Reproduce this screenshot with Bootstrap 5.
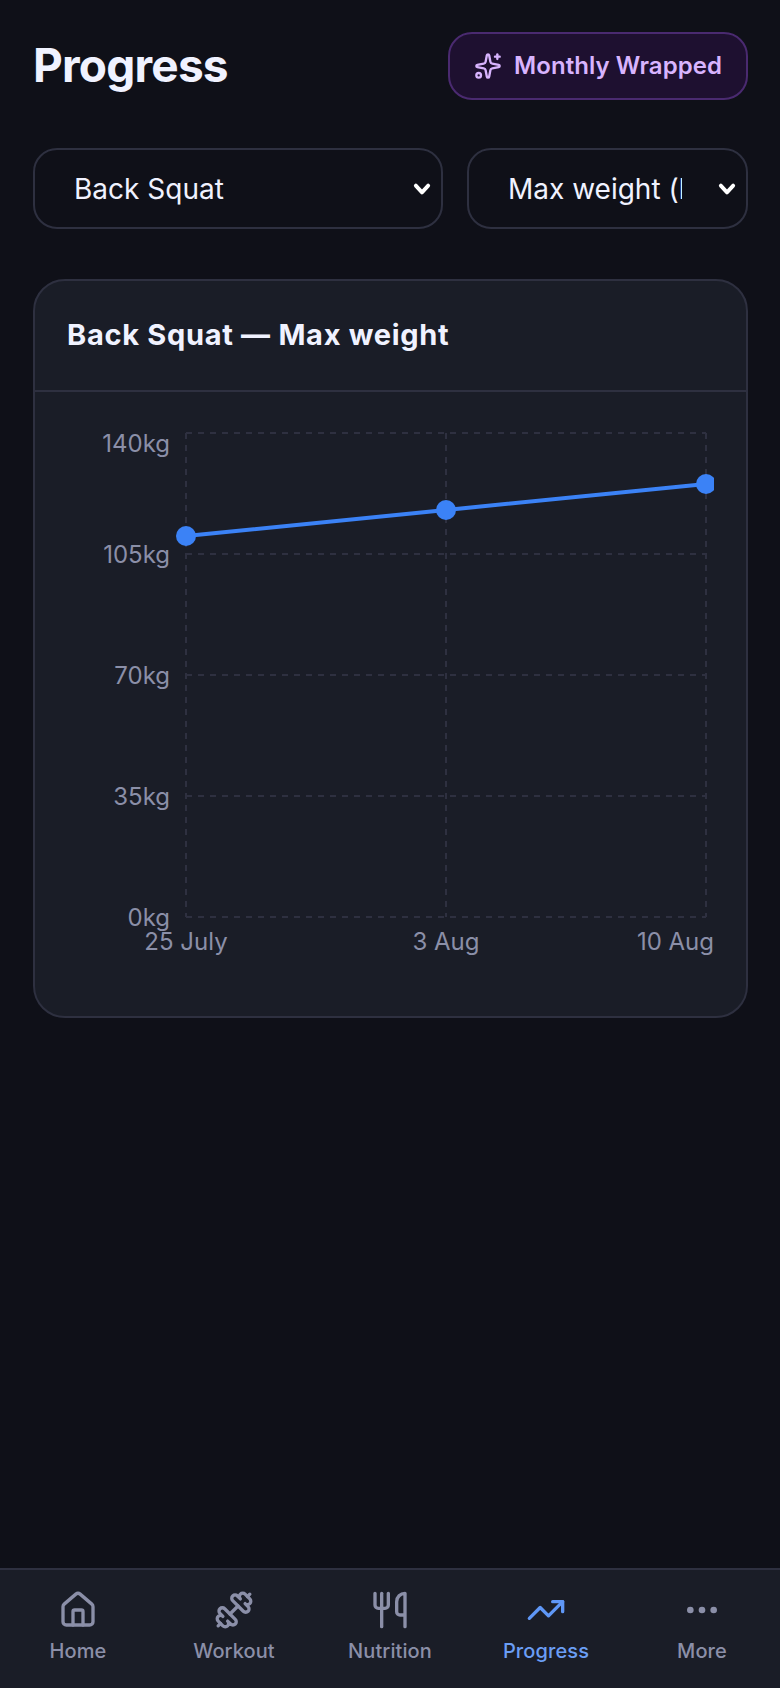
<!DOCTYPE html>
<html lang="en">
  <head>
    <meta charset="UTF-8" />
    <meta name="viewport" content="width=device-width, initial-scale=1.0" />
    <title>Progress</title>
    <link rel="stylesheet" href="https://cdn.jsdelivr.net/npm/bootstrap@5.3.5/dist/css/bootstrap.min.css" />
    <style>
      body {
        background: #0f1018;
        color: #f0f2ff;
        font-family: Inter, "Liberation Sans", sans-serif;
        height: 1688px;
      }
      .app-screen {
        height: 1688px;
      }
      .page-main {
        padding: 32px 32px 0 33px;
      }
      .page-title {
        font-size: 46px;
        font-weight: 700;
        letter-spacing: -0.8px;
        margin: 0;
        color: #f0f2ff;
      }
      .wrapped-btn {
        height: 68px;
        padding: 0 24px;
        gap: 12px;
        border: 2px solid #4a2a70;
        border-radius: 24px;
        background: #1e1030;
        color: #d8b4fe;
        font-size: 24px;
        font-weight: 600;
        letter-spacing: 0.05px;
        white-space: nowrap;
      }
      .wrapped-btn:hover {
        background: #1e1030;
        border-color: #4a2a70;
        color: #d8b4fe;
      }
      .filter-row {
        gap: 24px;
        margin-top: 48px;
      }
      .filter-select {
        height: 81px;
        padding: 0 64px 0 39px;
        border: 2px solid #2e3040;
        border-radius: 24px;
        background-color: #0f1018;
        background-image: url("data:image/svg+xml,%3csvg xmlns='http://www.w3.org/2000/svg' viewBox='0 0 16 12'%3e%3cpath fill='none' stroke='%23fff' stroke-width='3.4' stroke-linecap='round' stroke-linejoin='round' d='M2.5 3l5.5 6 5.5-6'/%3e%3c/svg%3e");
        background-position: right 10px center;
        background-size: 18px 14px;
        color: #f0f2ff;
        font-size: 28px;
      }
      .filter-main {
        flex: 1 1 0;
        min-width: 0;
      }
      .filter-metric {
        flex: 0 0 281px;
        width: 281px;
      }
      .chart-card {
        margin-top: 50px;
        background: #1a1d27;
        border: 2px solid #2e3040;
        border-radius: 32px;
        height: 739px;
        overflow: hidden;
      }
      .chart-head {
        background: transparent;
        border-bottom: 2px solid #2e3040;
        height: 112px;
        padding: 0 32px;
      }
      .chart-title {
        font-size: 29px;
        font-weight: 700;
        letter-spacing: 0.7px;
        color: #f0f2ff;
        margin: 0;
      }
      .chart-body {
        padding: 32px 0 32px 32px;
      }
      .chart-svg {
        display: block;
        width: 647px;
        height: 560px;
      }
      .chart-svg text {
        font-family: Inter, "Liberation Sans", sans-serif;
        font-size: 24px;
        fill: #8b8fa8;
      }
      .grid-line {
        stroke: #2e3040;
        stroke-width: 2;
        stroke-dasharray: 6 6;
      }
      .bottom-nav {
        height: 120px;
        background: #1a1d27;
        border-top: 2px solid #2e3040;
      }
      .nav-entry {
        flex: 1 1 0;
        padding-top: 20px;
        gap: 6px;
        color: #8b8fa8;
        font-size: 20px;
        font-weight: 500;
        letter-spacing: 0.1px;
        text-decoration: none;
      }
      .nav-entry.is-active {
        color: #6b9ef5;
      }
      .nav-entry svg {
        display: block;
      }
      .is-active svg {
        color: #5f97f6;
      }
    </style>
  </head>
  <body>
    <div class="app-screen d-flex flex-column">
      <main class="page-main flex-grow-1">
        <div class="d-flex justify-content-between align-items-center">
          <h1 class="page-title">Progress</h1>
          <button type="button" class="btn wrapped-btn d-flex align-items-center">
            <svg width="28" height="28" viewBox="0 0 24 24" fill="none" stroke="currentColor" stroke-width="2" stroke-linecap="round" stroke-linejoin="round">
              <path d="M11.017 2.814a1 1 0 0 1 1.966 0l1.051 5.558a2 2 0 0 0 1.594 1.594l5.558 1.051a1 1 0 0 1 0 1.966l-5.558 1.051a2 2 0 0 0-1.594 1.594l-1.051 5.558a1 1 0 0 1-1.966 0l-1.051-5.558a2 2 0 0 0-1.594-1.594l-5.558-1.051a1 1 0 0 1 0-1.966l5.558-1.051a2 2 0 0 0 1.594-1.594z" />
              <path d="M20 2v4" />
              <path d="M22 4h-4" />
              <circle cx="4" cy="20" r="2" />
            </svg>
            Monthly Wrapped
          </button>
        </div>

        <div class="d-flex filter-row">
          <select class="form-select filter-select filter-main">
            <option>Back Squat</option>
            <option>Bench Press</option>
            <option>Deadlift</option>
          </select>
          <select class="form-select filter-select filter-metric">
            <option>Max weight (kg)</option>
            <option>Total volume (kg)</option>
          </select>
        </div>

        <div class="card chart-card">
          <div class="card-header chart-head d-flex align-items-center">
            <h2 class="chart-title">Back Squat — Max weight</h2>
          </div>
          <div class="card-body chart-body">
            <svg class="chart-svg" viewBox="0 0 647 560">
              <line class="grid-line" x1="119" y1="9" x2="639" y2="9" />
              <line class="grid-line" x1="119" y1="130" x2="639" y2="130" />
              <line class="grid-line" x1="119" y1="251" x2="639" y2="251" />
              <line class="grid-line" x1="119" y1="372" x2="639" y2="372" />
              <line class="grid-line" x1="119" y1="493" x2="639" y2="493" />
              <line class="grid-line" x1="119" y1="9" x2="119" y2="493" />
              <line class="grid-line" x1="379" y1="9" x2="379" y2="493" />
              <line class="grid-line" x1="639" y1="9" x2="639" y2="493" />

              <text x="103" y="28" text-anchor="end">140kg</text>
              <text x="103" y="139" text-anchor="end">105kg</text>
              <text x="103" y="260" text-anchor="end">70kg</text>
              <text x="103" y="381" text-anchor="end">35kg</text>
              <text x="103" y="502" text-anchor="end">0kg</text>

              <text x="119" y="526" text-anchor="middle">25 July</text>
              <text x="379" y="526" text-anchor="middle">3 Aug</text>
              <text x="647" y="526" text-anchor="end">10 Aug</text>

              <polyline points="119,112 379,86 639,60" fill="none" stroke="#3b82f6" stroke-width="4" />
              <circle cx="119" cy="112" r="10" fill="#3b82f6" />
              <circle cx="379" cy="86" r="10" fill="#3b82f6" />
              <circle cx="639" cy="60" r="10" fill="#3b82f6" />
            </svg>
          </div>
        </div>
      </main>

      <nav class="bottom-nav d-flex">
        <a href="#" class="nav-entry d-flex flex-column align-items-center">
          <svg width="40" height="40" viewBox="0 0 24 24" fill="none" stroke="currentColor" stroke-width="2" stroke-linecap="round" stroke-linejoin="round">
            <path d="M15 21v-8a1 1 0 0 0-1-1h-4a1 1 0 0 0-1 1v8" />
            <path d="M3 10a2 2 0 0 1 .709-1.528l7-6a2 2 0 0 1 2.582 0l7 6A2 2 0 0 1 21 10v9a2 2 0 0 1-2 2H5a2 2 0 0 1-2-2z" />
          </svg>
          Home
        </a>
        <a href="#" class="nav-entry d-flex flex-column align-items-center">
          <svg width="40" height="40" viewBox="0 0 24 24" fill="none" stroke="currentColor" stroke-width="2" stroke-linecap="round" stroke-linejoin="round">
            <path d="M17.596 12.768a2 2 0 1 0 2.829-2.829l-1.768-1.767a2 2 0 0 0 2.828-2.829l-2.828-2.828a2 2 0 0 0-2.829 2.828l-1.767-1.768a2 2 0 1 0-2.829 2.829z" />
            <path d="m2.5 21.5 1.4-1.4" />
            <path d="m20.1 3.9 1.4-1.4" />
            <path d="M5.343 21.485a2 2 0 1 0 2.829-2.828l1.767 1.768a2 2 0 1 0 2.829-2.829l-6.364-6.364a2 2 0 1 0-2.829 2.829l1.768 1.767a2 2 0 0 0-2.828 2.829z" />
            <path d="m9.6 14.4 4.8-4.8" />
          </svg>
          Workout
        </a>
        <a href="#" class="nav-entry d-flex flex-column align-items-center">
          <svg width="40" height="40" viewBox="0 0 24 24" fill="none" stroke="currentColor" stroke-width="2" stroke-linecap="round" stroke-linejoin="round">
            <path d="M3 2v7c0 1.1.9 2 2 2h4a2 2 0 0 0 2-2V2" />
            <path d="M7 2v20" />
            <path d="M21 15V2a5 5 0 0 0-5 5v6c0 1.1.9 2 2 2h3Zm0 0v7" />
          </svg>
          Nutrition
        </a>
        <a href="#" class="nav-entry is-active d-flex flex-column align-items-center">
          <svg width="40" height="40" viewBox="0 0 24 24" fill="none" stroke="currentColor" stroke-width="2" stroke-linecap="round" stroke-linejoin="round">
            <polyline points="22 7 13.5 15.5 8.5 10.5 2 17" />
            <polyline points="16 7 22 7 22 13" />
          </svg>
          Progress
        </a>
        <a href="#" class="nav-entry d-flex flex-column align-items-center">
          <svg width="40" height="40" viewBox="0 0 24 24" fill="none" stroke="currentColor" stroke-width="2" stroke-linecap="round" stroke-linejoin="round">
            <circle cx="12" cy="12" r="1" />
            <circle cx="19" cy="12" r="1" />
            <circle cx="5" cy="12" r="1" />
          </svg>
          More
        </a>
      </nav>
    </div>
    <script src="https://cdn.jsdelivr.net/npm/bootstrap@5.3.5/dist/js/bootstrap.bundle.min.js"></script>
  </body>
</html>
